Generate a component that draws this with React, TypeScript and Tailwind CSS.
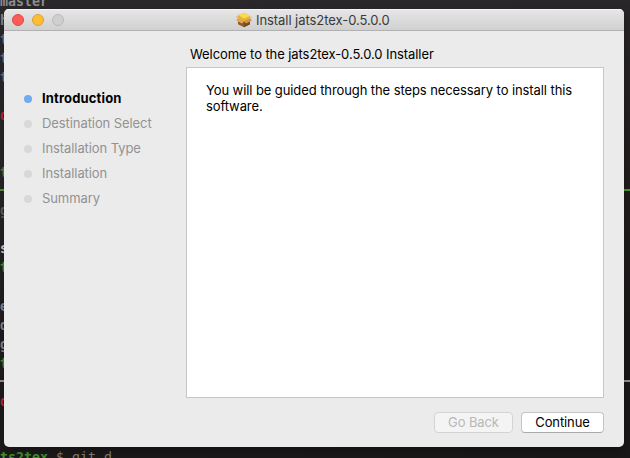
type Line = { text?: string; color?: string; rule?: string };

const green = 'text-[#43972c]';
const grey = 'text-[#8b8d8f]';

const lines: Line[] = [
  { text: 'master', color: grey },
  { text: 'h', color: grey },
  { text: 't', color: 'text-[#6b7780]' },
  { text: 't', color: 'text-[#6b7780]' },
  { text: 't', color: 'text-[#6b7780]' },
  {},
  { text: 'd', color: 'text-[#c92438]' },
  {},
  {},
  { text: 't', color: green },
  { rule: 'bg-[#4f9c34]' },
  { text: 'g', color: 'text-[#66605c]' },
  {},
  { text: 's', color: 'text-[#d6d6da]' },
  { text: 't', color: green },
  {},
  { text: 'e', color: grey },
  { text: 'd', color: grey },
  { text: 'g', color: grey },
  { text: 't', color: green },
  { rule: 'bg-[#9a9896]' },
  { text: 'd', color: 'text-[#c92438]' },
  {},
  {},
];

const steps = ['Introduction', 'Destination Select', 'Installation Type', 'Installation', 'Summary'];

function PackageIcon() {
  return (
    <svg width="16" height="16" viewBox="0 0 16 16" className="shrink-0">
      <path d="M2 7 8 9l6-2v5.2L8 15.2 2 12.2Z" fill="#935a24" />
      <path d="M8 9v6.2l6-3V7Z" fill="#7b491c" />
      <path d="M2.2 3 8.5.8 14 4v3L8 9.4 2 7Z" fill="#e5b62c" />
      <path d="M2.2 3 8.5.8 14 4 8 6.6Z" fill="#f8dd4e" />
      <path d="m1.5 6.8 6.5 2.6-2 2L0 8.6Z" fill="#dda572" />
      <path d="m14.5 6.8-6.5 2.6 2 2 6-2.8Z" fill="#cf935c" />
      <path d="M0 4.4 2.2 3.2v3.6H1.5ZM14 4l2 1.2-1.5 1.8Z" fill="#e2b69c" />
    </svg>
  );
}

function Terminal() {
  return (
    <div className="-mt-2 font-['DejaVu_Sans_Mono',monospace] text-[13.3px] font-bold">
      {lines.map((line, i) => (
        <div key={i} className={`flex h-[19.04px] items-center whitespace-pre leading-[19px] ${line.color ?? ''}`}>
          {line.rule ? <div className={`mb-[3px] h-0.5 w-full ${line.rule}`} /> : line.text}
        </div>
      ))}
      <div className="-mt-px h-[19px] whitespace-pre leading-[19px]">
        <span className={green}>ts2tex</span>
        <span className="font-normal text-[#8a827f]"> $ git d</span>
      </div>
    </div>
  );
}

export default function App() {
  return (
    <div className="relative h-[458px] w-[630px] overflow-hidden bg-[linear-gradient(165deg,#2b292b_0%,#2a272a_25%,#211d1d_55%,#191718_100%)]">
      <Terminal />
      <div className="absolute left-1 top-[9px] flex h-[438px] w-[620px] flex-col overflow-hidden rounded-[5px] bg-[#ebebeb] font-[Inter,sans-serif] text-[13px] text-black shadow-[0_5px_12px_rgba(0,0,0,0.3)]">
        <header className="flex h-[22px] shrink-0 items-center border-b border-[#b1b1b1] bg-linear-to-b from-[#e7e7e7] to-[#d0d0d0] shadow-[inset_0_1px_0_#f4f4f4]">
          <div className="flex w-[232px] gap-2 pl-2">
            <i className="size-3 rounded-full border border-[#e04845] bg-[#fc5b57]" />
            <i className="size-3 rounded-full border border-[#dea032] bg-[#fdbe33]" />
            <i className="size-3 rounded-full border border-[#b9b9b9] bg-[#cfcfcf]" />
          </div>
          <PackageIcon />
          <h1 className="ml-1 mt-0.5 whitespace-nowrap tracking-[-0.06px] text-[#3a3a3a]">Install jats2tex-0.5.0.0</h1>
        </header>
        <div className="flex min-h-0 grow">
          <ul className="w-[182px] shrink-0 pl-5 pt-[55px]">
            {steps.map((step, i) => (
              <li key={step} className={`flex h-[25px] items-center gap-2.5 ${i === 0 ? 'font-bold tracking-[0.15px]' : 'tracking-[-0.08px] text-[#929292]'}`}>
                <i className={`size-2 rounded-full ${i === 0 ? 'bg-[#6fabef]' : 'bg-[#d8d8d8]'}`} />
                {step}
              </li>
            ))}
          </ul>
          <main className="w-[418px] shrink-0">
            <h2 className="h-9 pl-1 pt-[15px] leading-4 tracking-[-0.08px]">Welcome to the jats2tex-0.5.0.0 Installer</h2>
            <section className="h-[331px] border border-[#c7c7c7] bg-white pl-[19px] pt-3.5 leading-4 tracking-[-0.09px]">
              You will be guided through the steps necessary to install this
              <br />
              software.
            </section>
            <footer className="flex justify-end gap-2 pt-3.5">
              <button disabled className="h-[21px] w-[79px] rounded border border-[#d3d3d3] bg-[#f4f4f4] tracking-[-0.1px] text-[#b8b8b8]">Go Back</button>
              <button className="h-[21px] w-[83px] rounded border border-[#c5c5c5] border-b-[#aaaaaa] bg-white tracking-[-0.1px]">Continue</button>
            </footer>
          </main>
        </div>
      </div>
    </div>
  );
}
